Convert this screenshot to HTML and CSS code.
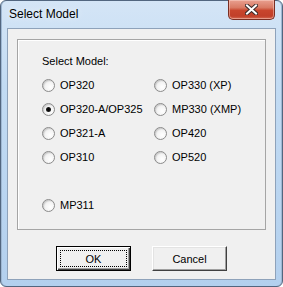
FILE: index.html
```html
<!DOCTYPE html>
<html lang="en">
<head>
    <meta charset="UTF-8">
    <title>Select Model</title>
    <link rel="stylesheet" href="styles.css">
</head>
<body>
    <div class="window">
        <div class="titlebar">
            <span class="title">Select Model</span>
            <button class="close-button" aria-label="Close">
                <svg width="13" height="11" viewBox="0 0 13 11">
                    <path d="M2 1.5 L11 9.5 M11 1.5 L2 9.5" stroke="#3b2a2a" stroke-width="4" stroke-linecap="square"/>
                    <path d="M2 1.5 L11 9.5 M11 1.5 L2 9.5" stroke="#fff" stroke-width="2" stroke-linecap="square"/>
                </svg>
            </button>
        </div>
        <div class="client">
            <div class="group">
                <div class="group-label">Select Model:</div>
                <div class="options">
                    <div class="option"><span class="radio"></span>OP320</div>
                    <div class="option"><span class="radio"></span>OP330 (XP)</div>
                    <div class="option"><span class="radio checked"></span>OP320-A/OP325</div>
                    <div class="option"><span class="radio"></span>MP330 (XMP)</div>
                    <div class="option"><span class="radio"></span>OP321-A</div>
                    <div class="option"><span class="radio"></span>OP420</div>
                    <div class="option"><span class="radio"></span>OP310</div>
                    <div class="option"><span class="radio"></span>OP520</div>
                    <div class="option last"><span class="radio"></span>MP311</div>
                </div>
            </div>
            <div class="buttons">
                <button class="btn default">OK</button>
                <button class="btn">Cancel</button>
            </div>
        </div>
    </div>
</body>
</html>
```

FILE: styles.css
```css
body {
    margin: 0;
    background: #fff;
    font-family: 'Liberation Sans', Arial, sans-serif;
}

.window {
    width: 283px;
    height: 287px;
    box-sizing: border-box;
    border: 1px solid #52667f;
    border-radius: 6px;
    padding: 0 6px 6px 6px;
    background: linear-gradient(180deg, #d4e5f6 0%, #c2dbf3 30%, #b3d0ee 100%);
    box-shadow: inset 1px 0 0 #9fb8d3, inset -1px 0 0 #9fb8d3;
    display: flex;
    flex-direction: column;
}

.titlebar {
    height: 27px;
    display: flex;
    align-items: flex-start;
}

.title {
    margin: 6px 0 0 2px;
    font-size: 12px;
    line-height: 15px;
    color: #000;
    text-shadow: 0 0 6px rgba(255, 255, 255, 0.9);
}

.close-button {
    margin: -1px 1px 0 auto;
    width: 47px;
    height: 20px;
    padding: 0;
    border: 1px solid #7a2e22;
    border-top: none;
    border-radius: 0 0 5px 5px;
    background: linear-gradient(180deg, #e9a090 0%, #d97a64 40%, #c8452d 55%, #c13f29 85%, #d56b54 100%);
    box-shadow: inset 0 0 0 1px rgba(255, 220, 210, 0.45);
    display: flex;
    justify-content: center;
    align-items: center;
}

.client {
    flex: 1;
    border: 1px solid #8ea2ba;
    background: #f0f0f0;
    display: flex;
    flex-direction: column;
}

.group {
    margin: 10px 9px 0 9px;
    height: 191px;
    box-sizing: border-box;
    border: 1px solid #a5a5a5;
    box-shadow: inset 1px 1px 0 #fff;
    padding: 15px 0 0 24px;
    font-size: 11px;
    line-height: 13px;
    color: #000;
}

.group-label {
    margin-bottom: 5px;
}

.options {
    display: grid;
    grid-template-columns: 112px 1fr;
    grid-auto-rows: 24px;
}

.option {
    display: flex;
    align-items: center;
}

.option.last {
    grid-column: 1;
    grid-row: 6;
}

.radio {
    position: relative;
    width: 13px;
    height: 13px;
    box-sizing: border-box;
    margin-right: 5px;
    border-radius: 50%;
    border: 1px solid #8b8b8b;
    background: radial-gradient(circle at 65% 65%, #ffffff 0%, #f4f4f4 45%, #d6d6d6 100%);
    box-shadow: inset 1px 1px 1px rgba(0, 0, 0, 0.12);
}

.radio.checked::after {
    content: '';
    position: absolute;
    left: 3px;
    top: 3px;
    width: 5px;
    height: 5px;
    border-radius: 50%;
    background: radial-gradient(circle, #000 0%, #111 55%, #555 100%);
}

.buttons {
    margin-top: 16px;
    display: flex;
    justify-content: center;
    gap: 21px;
}

.btn {
    width: 75px;
    height: 25px;
    padding: 0;
    font-family: 'Liberation Sans', Arial, sans-serif;
    font-size: 11px;
    color: #000;
    background: #f0f0f0;
    border: 1px solid;
    border-color: #fff #404040 #404040 #fff;
    box-shadow: inset -1px -1px 0 #a0a0a0, inset 1px 1px 0 #e3e3e3;
}

.btn.default {
    border: 1px solid #000;
    box-shadow: inset 1px 1px 0 #fff, inset -1px -1px 0 #404040, inset -2px -2px 0 #a0a0a0;
    outline: 1px dotted #000;
    outline-offset: -5px;
}
```
